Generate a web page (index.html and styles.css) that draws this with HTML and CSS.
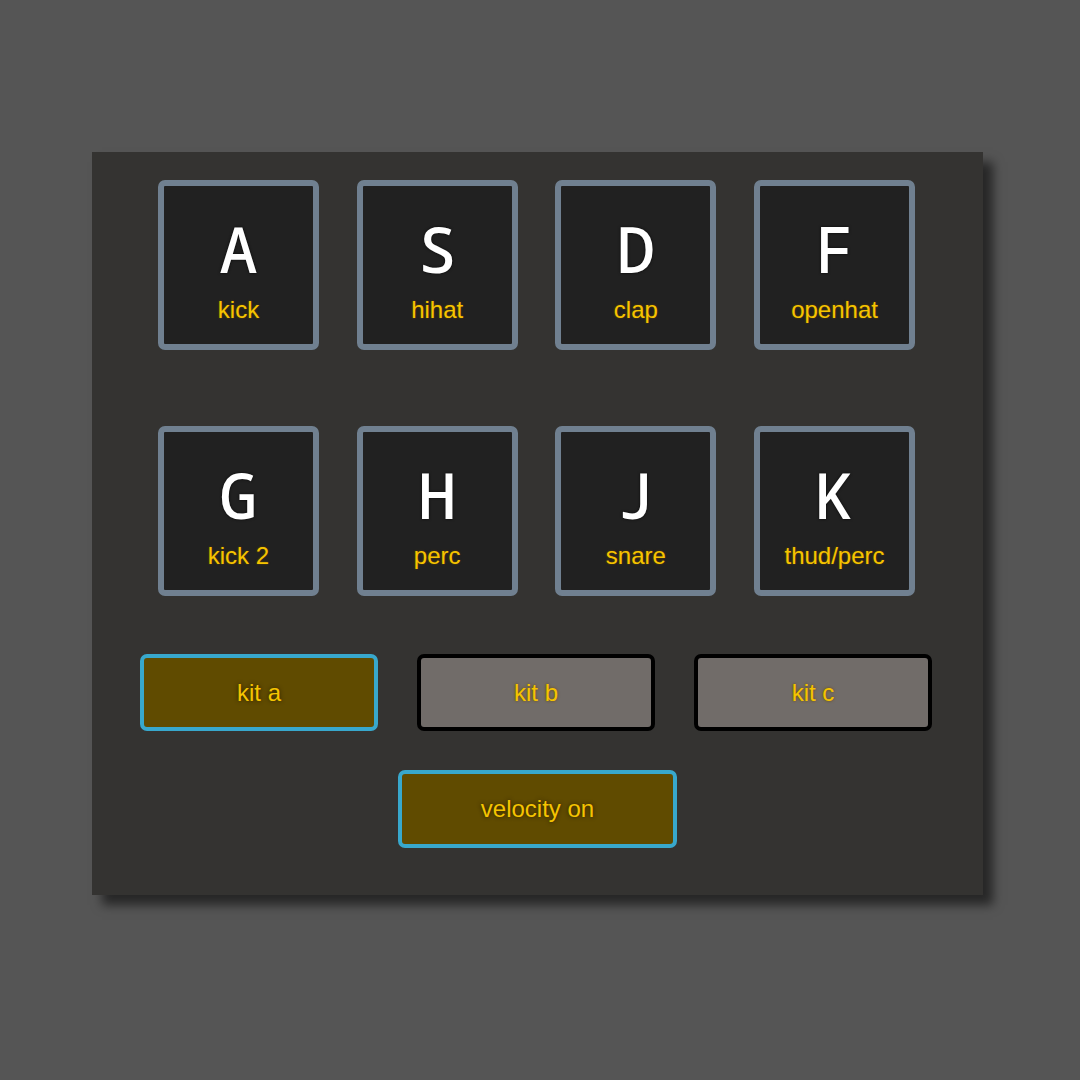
FILE: index.html
```html
<!DOCTYPE html>
<html>
<head>
<meta charset="utf-8">
<link rel="stylesheet" href="styles.css">
</head>
<body>
<div class="panel">
  <div class="pads">
    <div class="pad"><div class="key">A</div><div class="label">kick</div></div>
    <div class="pad"><div class="key">S</div><div class="label">hihat</div></div>
    <div class="pad"><div class="key">D</div><div class="label">clap</div></div>
    <div class="pad"><div class="key">F</div><div class="label">openhat</div></div>
    <div class="pad"><div class="key">G</div><div class="label">kick 2</div></div>
    <div class="pad"><div class="key">H</div><div class="label">perc</div></div>
    <div class="pad"><div class="key">J</div><div class="label">snare</div></div>
    <div class="pad"><div class="key">K</div><div class="label">thud/perc</div></div>
  </div>
  <div class="kits">
    <div class="btn active">kit a</div>
    <div class="btn">kit b</div>
    <div class="btn">kit c</div>
  </div>
  <div class="vel-row">
    <div class="btn active velocity">velocity on</div>
  </div>
</div>
</body>
</html>
```
FILE: styles.css
```css
html, body {
  margin: 0;
  padding: 0;
  background: #555555;
  width: 1080px;
  height: 1080px;
}
.panel {
  box-sizing: border-box;
  margin: 152px 0 0 92px;
  width: 891px;
  height: 743px;
  background: #343331;
  box-shadow: 10px 10px 10px rgba(0, 0, 0, 0.55);
  padding: 28px 0 0 0;
  display: flex;
  flex-direction: column;
  align-items: center;
}
.pads {
  display: grid;
  grid-template-columns: repeat(4, 161px);
  grid-auto-rows: 170px;
  column-gap: 37.7px;
  row-gap: 76px;
  margin-left: -2px;
}
.pad {
  box-sizing: border-box;
  border: 6px solid #708090;
  border-radius: 7px;
  background: #212121;
  padding-top: 32px;
  text-align: center;
}
.key {
  font-family: "Noto Sans Mono", "DejaVu Sans Mono", monospace;
  font-size: 64px;
  font-weight: 500;
  line-height: 62px;
  height: 62px;
  color: #ffffff;
  text-shadow: 0 0 3px rgba(0, 0, 0, 0.8);
}
.label {
  margin-top: 16px;
  font-family: "Liberation Sans", Arial, sans-serif;
  font-size: 24px;
  line-height: 28px;
  color: #f5c400;
  text-shadow: 0 0 2px #6b4a00;
}
.kits {
  margin-top: 58px;
  display: flex;
  gap: 39px;
  margin-left: -3px;
}
.btn {
  box-sizing: border-box;
  width: 238px;
  height: 77px;
  border: 4px solid #000000;
  border-radius: 7px;
  background: #716c69;
  display: flex;
  align-items: center;
  justify-content: center;
  font-family: "Liberation Sans", Arial, sans-serif;
  font-size: 24px;
  color: #f5c400;
  text-shadow: 0 0 3px #6b4a00;
}
.btn.active {
  border-color: #38a8cc;
  background: #604b00;
  text-shadow: 0 0 4px #2a1e00;
}
.vel-row {
  margin-top: 39px;
  display: flex;
  justify-content: center;
}
.velocity {
  width: 279px;
  height: 78px;
}
```
